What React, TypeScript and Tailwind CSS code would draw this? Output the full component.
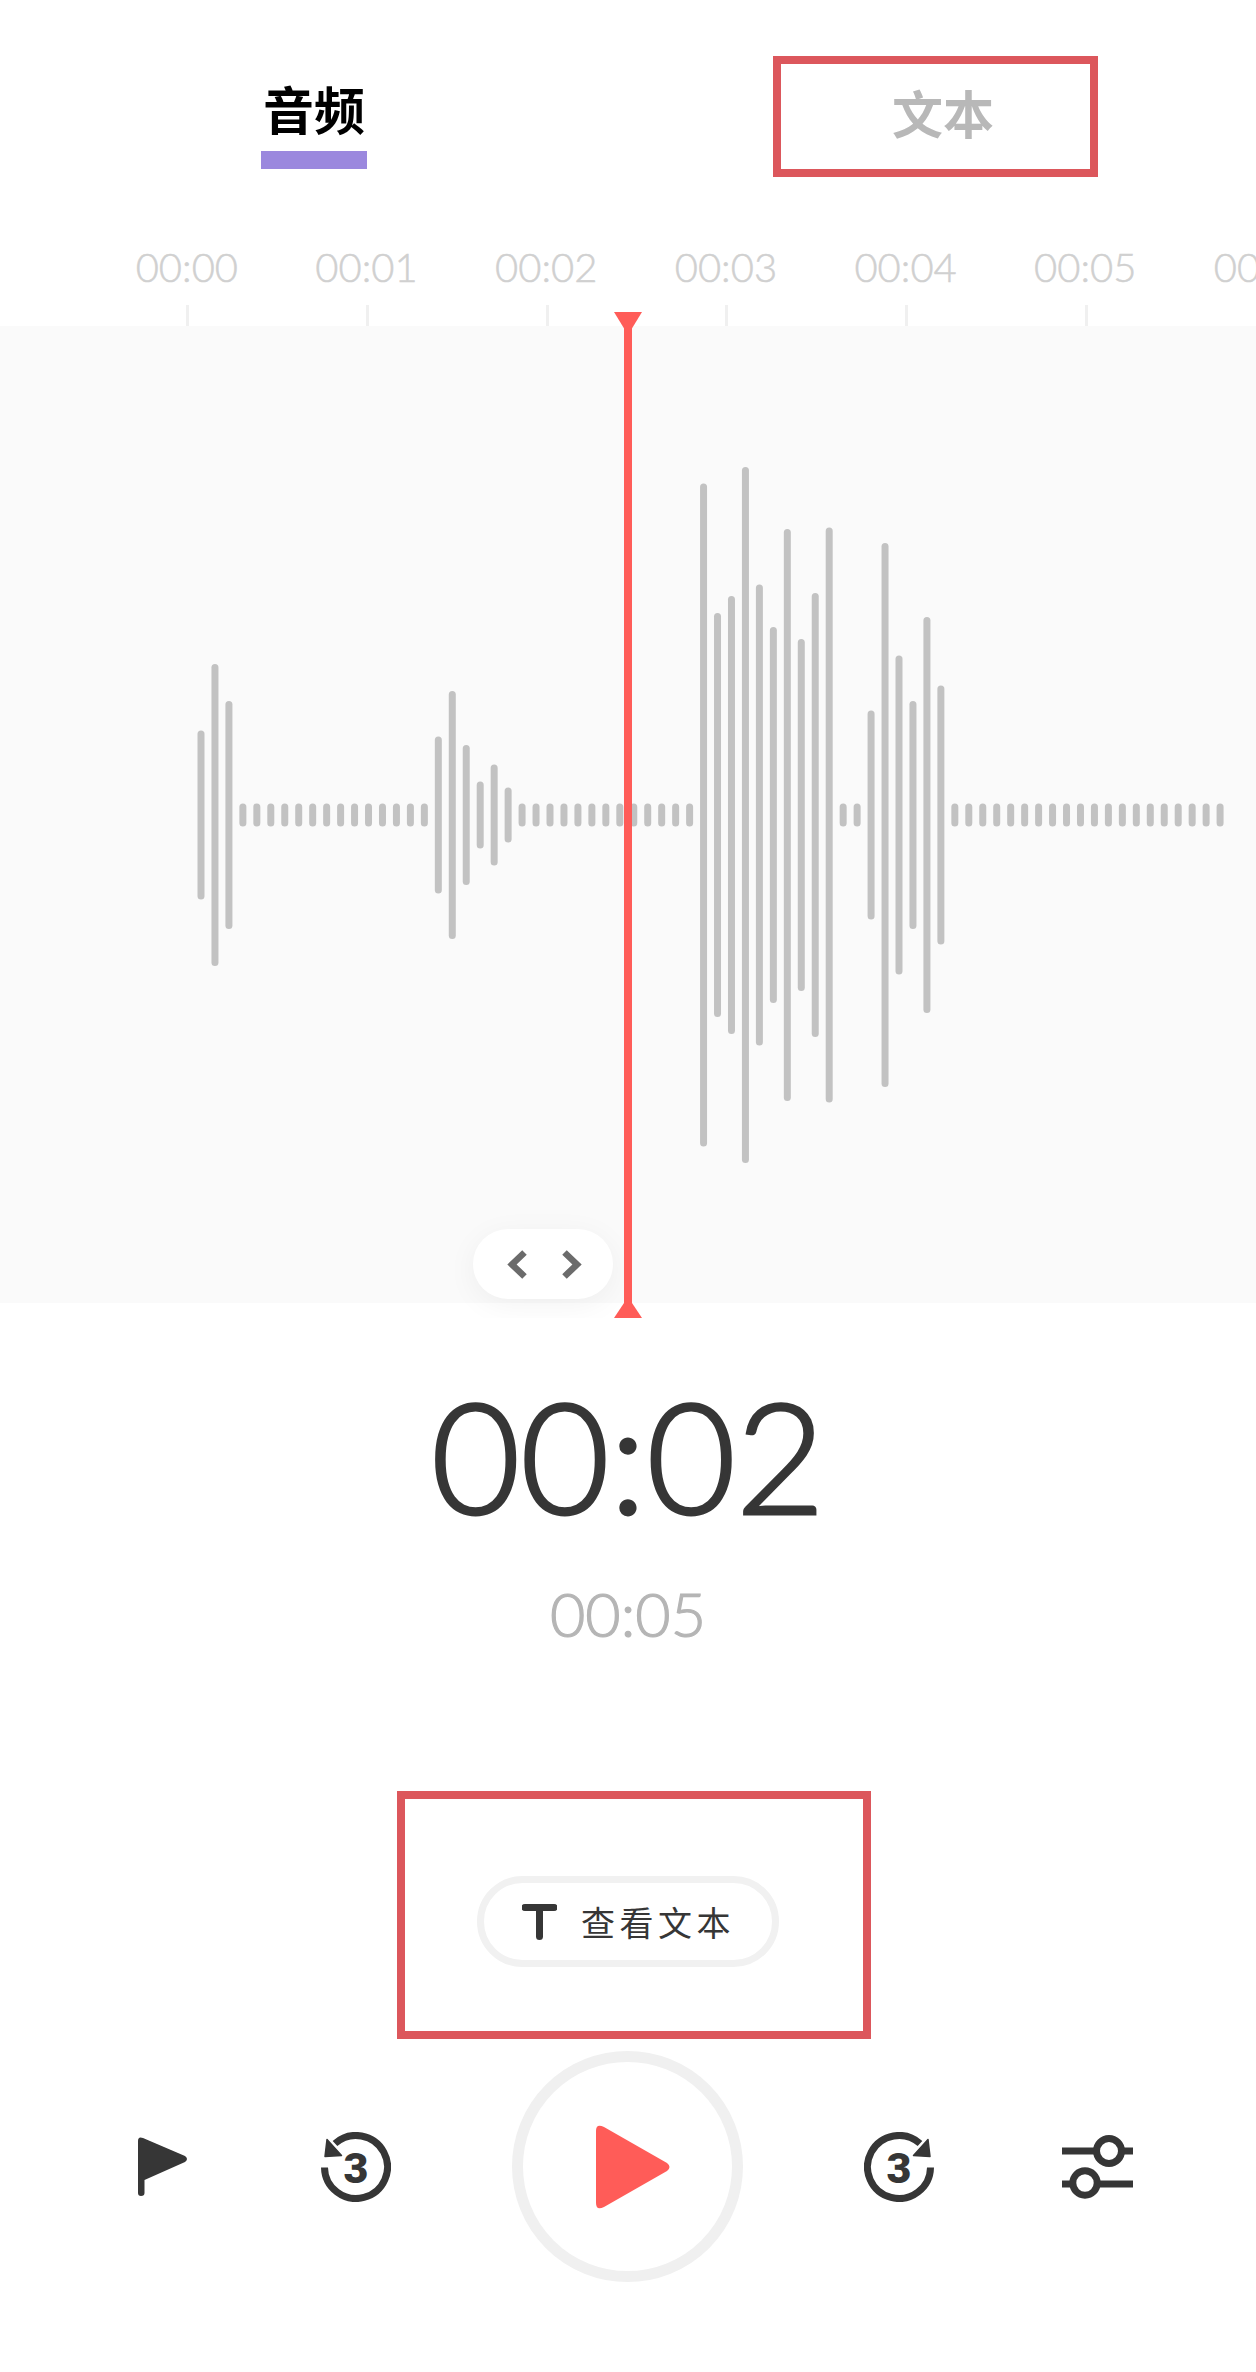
const small = 23;
const barHeights: number[] = [
  169, 302, 228,
  ...Array(14).fill(small),
  157, 248, 140, 67, 101, 55,
  ...Array(13).fill(small),
  663, 404, 438, 696, 461, 376, 572, 352, 444, 575,
  small, small,
  209, 544, 319, 228, 396, 259,
  ...Array(20).fill(small),
];

const labels = ["00:00", "00:01", "00:02", "00:03", "00:04", "00:05", "00:06"];
const cjk = { fontFamily: '"Noto Sans CJK SC", sans-serif' };
const lato = { fontFamily: 'Lato, sans-serif' };

function Waveform() {
  return (
    <svg className="absolute left-0 top-0" width="1256" height="977" viewBox="0 0 1256 977" fill="#c2c2c2">
      {barHeights.map((h, i) => (
        <rect key={i} x={197.5 + 13.96 * i} y={489 - h / 2} width="7" height={h} rx="3.5" />
      ))}
    </svg>
  );
}

function Seek({ forward }: { forward?: boolean }) {
  return (
    <svg width="70" height="70" viewBox="0 0 70 70" className="shrink-0">
      <g transform={forward ? "translate(70 0) scale(-1 1)" : undefined}>
        <path d="M3.5 35.5A31.5 31.5 0 1 0 14 11.5" fill="none" stroke="#363636" strokeWidth="7" />
        <path d="M4 24.5L6 7.5L20.5 23.5Z" fill="#363636" stroke="#363636" strokeWidth="1.5" strokeLinejoin="round" />
      </g>
      <text x="35" y="50.5" textAnchor="middle" fontSize="43" fontWeight="900" fill="#363636" style={{ fontFamily: 'Roboto, sans-serif' }}>3</text>
    </svg>
  );
}

export default function App() {
  return (
    <div className="flex h-[2372px] w-[1256px] flex-col overflow-hidden bg-white">
      <div className="flex h-[177px] items-start pl-[261px] pt-[56px]">
        <div className="flex w-[106px] flex-col items-center pt-[20px]">
          <span className="text-[51px] font-bold leading-[64px] text-black" style={cjk}>音频</span>
          <div className="mt-[11px] h-[18px] w-[106px] bg-[#9b88de]" />
        </div>
        <div className="ml-[406px] flex h-[121px] w-[325px] items-center justify-center border-8 border-[#dc575c] pb-[10px] pl-[15px]">
          <span className="text-[51px] font-bold leading-[64px] text-[#b8b8b8]" style={cjk}>文本</span>
        </div>
      </div>

      <div className="flex h-[149px] items-end overflow-hidden pl-[98px]">
        {labels.map((l) => (
          <div key={l} className="flex w-[179.7px] shrink-0 flex-col items-center">
            <span className="pr-[2px] text-[40px] font-light leading-[48px] text-[#d0d0d0] [-webkit-text-stroke:0.5px_#d0d0d0]" style={lato}>{l}</span>
            <div className="mt-[14px] h-[21px] w-[3px] bg-[#f0f0f0]" />
          </div>
        ))}
      </div>

      <div className="relative h-[977px] bg-[#fafafa]">
        <Waveform />
        <div className="absolute left-[443px] top-[883px] h-[109px] w-[200px] overflow-hidden">
          <div className="mx-[30px] mt-[20px] flex h-[70px] w-[140px] items-center justify-center gap-[35px] rounded-full bg-white pl-[3px] pt-[1px] shadow-[0_6px_30px_rgba(0,0,0,0.05)]">
            <svg width="20" height="29" viewBox="0 0 20 29"><path d="M17.5 2.5L5 14.5L17.5 26.5" fill="none" stroke="#6b6b6b" strokeWidth="6.5" /></svg>
            <svg width="20" height="29" viewBox="0 0 20 29"><path d="M2.5 2.5L15 14.5L2.5 26.5" fill="none" stroke="#6b6b6b" strokeWidth="6.5" /></svg>
          </div>
        </div>
        <svg className="absolute left-[614px] top-[-14px]" width="28" height="1006" viewBox="0 0 28 1006" fill="#ff5c58">
          <rect x="10" y="0" width="8" height="1006" />
          <path d="M0 0H28L17 18H11Z" />
          <path d="M14 985L28 1006H0Z" />
        </svg>
      </div>

      <div className="flex flex-col items-center">
        <div className="mt-[77px] text-[154px] font-light leading-[150px] text-[#363636] [-webkit-text-stroke:3px_#363636]" style={lato}>00:02</div>
        <div className="mt-[48px] text-[61px] font-light leading-[72px] text-[#b5b5b5] [-webkit-text-stroke:1.2px_#b5b5b5]" style={lato}>00:05</div>
      </div>

      <div className="ml-[397px] mt-[141px] flex h-[248px] w-[474px] items-center justify-center border-8 border-[#dc575c] pr-[12px] pt-[13px]">
        <div className="flex h-[91px] w-[302px] items-center rounded-full border-[7px] border-[#f1f1f1] pl-[38px]">
          <svg width="35" height="36" viewBox="0 0 35 36" className="shrink-0">
            <path d="M3 3.5H32M17.5 3.5V32.5" fill="none" stroke="#363636" strokeWidth="7" strokeLinecap="round" />
          </svg>
          <span className="ml-[24px] text-[34px] leading-[44px] tracking-[4.5px] text-[#363636]" style={cjk}>查看文本</span>
        </div>
      </div>

      <div className="mt-[12px] flex items-center pl-[138px]">
        <svg width="49" height="59" viewBox="0 0 49 59" fill="#363636" className="shrink-0">
          <path d="M0 4Q0 -1 5 1L47 19Q51 22 47 25L6.5 43V56Q6.5 59 3 59Q0 59 0 56Z" />
        </svg>
        <div className="ml-[134px]"><Seek /></div>
        <div className="ml-[121px] flex h-[231px] w-[231px] items-center justify-center rounded-full border-[11px] border-[#f0f0f0] pl-[10px]">
          <svg width="74" height="84" viewBox="0 0 74 84" fill="#ff5c58">
            <path d="M0 6Q0 -2 8 2L71 38Q76 42 71 46L8 82Q0 86 0 78Z" />
          </svg>
        </div>
        <div className="ml-[121px]"><Seek forward /></div>
        <svg width="71" height="64" viewBox="0 0 71 64" className="ml-[128px] shrink-0" fill="none" stroke="#363636" strokeWidth="7">
          <path d="M0 16H34M60 16H71M0 49H10M36 49H71" strokeLinecap="round" />
          <circle cx="47" cy="16" r="12.5" />
          <circle cx="23" cy="48" r="12.2" />
        </svg>
      </div>
    </div>
  );
}
